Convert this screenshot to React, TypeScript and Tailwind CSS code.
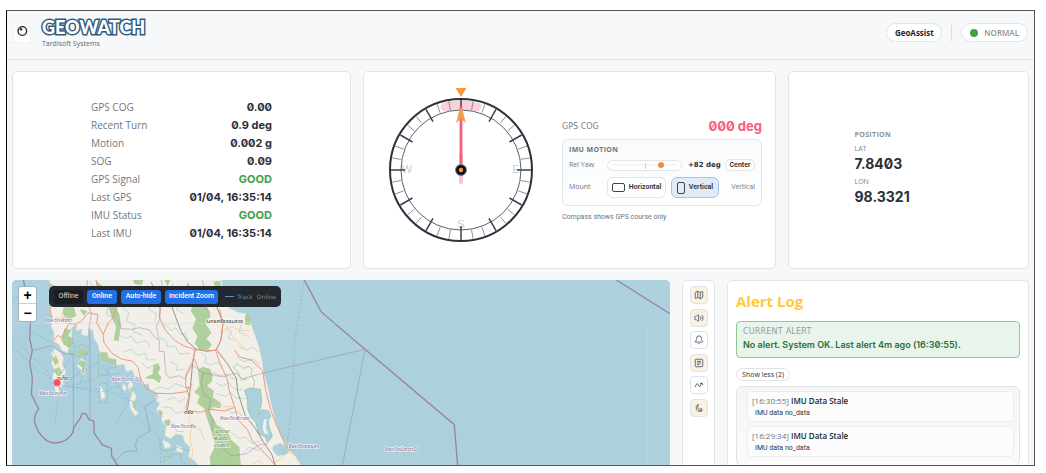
import type { ReactNode } from 'react';
import { Bell, Map, Moon, Volume2 } from 'lucide-react';

const readings = [
  { label: 'GPS COG', value: '0.00' },
  { label: 'Recent Turn', value: '0.9 deg' },
  { label: 'Motion', value: '0.002 g' },
  { label: 'SOG', value: '0.09' },
  { label: 'GPS Signal', value: 'GOOD', good: true },
  { label: 'Last GPS', value: '01/04, 16:35:14' },
  { label: 'IMU Status', value: 'GOOD', good: true },
  { label: 'Last IMU', value: '01/04, 16:35:14' },
];

const alerts = [
  { time: '[16:30:55]', title: 'IMU Data Stale', detail: 'IMU data no_data' },
  { time: '[16:29:34]', title: 'IMU Data Stale', detail: 'IMU data no_data' },
];

const Header = () => (
  <header className="flex items-center justify-between h-[49px] shrink-0 pl-[5px] pr-[6px] pb-[5px] border-b border-[#e1e5ea]">
    <div className="flex items-center gap-[10px]">
      <svg viewBox="0 0 60 66" className="w-5 h-[22px]" aria-hidden="true">
        <path d="M2 63V55Q5 52 5 44V30C5 12 16 3 30 3S55 12 55 30V44Q55 52 58 55V63Q50 58 42 62T24 62T2 63Z" fill="#fff" stroke="#e4e6e9" strokeWidth="2" strokeDasharray="6 4" />
        <circle cx="31" cy="27" r="13" fill="#fff" stroke="#222" strokeWidth="4" />
        <circle cx="27" cy="22" r="4" fill="#333" />
      </svg>
      <div>
        <h1 className="font-['Lato'] font-black text-[18px] leading-[22px] text-white [-webkit-text-stroke:3px_#315b7d] [paint-order:stroke_fill]">
          GEOWATCH
        </h1>
        <p className="text-[7px] leading-[12px] text-[#5f6874]">Tardisoft Systems</p>
      </div>
    </div>
    <div className="flex items-center gap-[9px]">
      <button className="h-[19px] w-14 rounded-full border border-[#dfe5eb] bg-white text-[8px] font-bold text-[#1f252c]">
        GeoAssist
      </button>
      <div className="w-px h-4 bg-[#d9dee3]" />
      <div className="flex items-center gap-[6px] h-[19px] px-2 rounded-full border border-[#dfe5eb] bg-white text-[8px] font-semibold text-[#8b929b]">
        <span className="size-2 rounded-full bg-[#43a047]" />
        NORMAL
      </div>
    </div>
  </header>
);

const Card = ({ children, className }: { children: ReactNode; className: string }) => (
  <section className={`rounded-[5px] border border-[#e0e5ea] bg-white ${className}`}>{children}</section>
);

const Compass = () => {
  const minor = Array.from({ length: 36 }, (_, i) => i * 10).filter((a) => a % 30 !== 0);
  const major = Array.from({ length: 12 }, (_, i) => i * 30);
  return (
    <svg viewBox="-76 -84 152 168" className="w-[152px] h-[168px] shrink-0" aria-label="Compass">
      <path d="M-16 -63A65 65 0 0 1 16 -63" fill="none" stroke="#fbd0d8" strokeWidth="9" strokeLinecap="round" />
      <g fill="#c8ccd3" fontSize="11" textAnchor="middle" fontFamily="Liberation Sans, sans-serif">
        <text x="0" y="-50">N</text>
        <text x="55" y="3">E</text>
        <text x="0" y="58">S</text>
        <text x="-54" y="3">W</text>
      </g>
      <circle r="71" fill="none" stroke="#2c323b" strokeWidth="2" />
      <circle r="60" fill="none" stroke="#59616c" strokeWidth="1" />
      {minor.map((a) => (
        <line key={a} y1="-70" y2="-61" stroke="#69717b" strokeWidth="0.7" transform={`rotate(${a})`} />
      ))}
      {major.map((a) => (
        <line key={a} y1="-70" y2="-56" stroke="#3a424d" strokeWidth="1.5" transform={`rotate(${a})`} />
      ))}
      <path d="M-5.5 -82H5.500L0 -73Z" fill="#f79a3e" />
      <path d="M0 -15V12" stroke="#fbc3ce" strokeWidth="4" strokeLinecap="round" />
      <path d="M0 -64V-6" stroke="#f4607d" strokeWidth="2.800" />
      <path d="M0 -63L5 -47L0 -51L-5 -47Z" fill="#f79a3e" />
      <circle r="5.500" fill="#0f141c" stroke="#7e858e" strokeWidth="0.800" />
      <circle r="2.200" fill="#f79a3e" />
    </svg>
  );
};

const CoursePanel = () => (
  <div className="w-[200px]">
    <div className="flex items-center justify-between h-[19px] mb-[3px]">
      <span className="font-['DejaVu_Sans'] text-[8px] text-[#7b838d]">GPS COG</span>
      <span className="font-['Inter'] slashed-zero text-[13px] font-bold text-[#f2607a]">000 deg</span>
    </div>
    <div className="h-[67px] rounded-md border border-[#dfe4e9] bg-linear-to-b from-[#f8fafc] to-white px-[6px] pt-1">
      <h2 className="text-[7px] leading-[12px] font-bold tracking-wider text-[#6b7480]">IMU MOTION</h2>
      <div className="flex items-center mt-[3px] h-3">
        <label htmlFor="yaw" className="w-[38px] text-[7px] text-[#6b7480]">Rel Yaw</label>
        <div className="relative flex items-center w-[75px] h-[11px] rounded-full border border-[#dfe4e9] bg-white px-1">
          <span className="absolute left-[37px] top-[2px] w-px h-[6px] bg-[#ccd1d7]" />
          <input
            id="yaw"
            type="range"
            min={-150}
            max={150}
            defaultValue={82}
            className="relative w-full h-[6px] appearance-none bg-linear-to-b from-transparent from-40% via-[#c3c8ce] via-50% to-transparent to-60% [&::-webkit-slider-thumb]:appearance-none [&::-webkit-slider-thumb]:size-[6px] [&::-webkit-slider-thumb]:rounded-full [&::-webkit-slider-thumb]:bg-[#f98b3c]"
          />
        </div>
        <span className="ml-[6px] font-['DejaVu_Sans'] text-[7px] font-bold whitespace-nowrap text-[#2a3038]">+82 deg</span>
        <button className="ml-auto w-[30px] h-3 shrink-0 rounded-full border border-[#dfe4e9] bg-white font-['Roboto'] text-[7px] leading-[10px] font-semibold text-[#2a3038]">
          Center
        </button>
      </div>
      <div className="flex items-center mt-[6px] h-[21px] text-[7px]">
        <span className="w-[38px] text-[#6b7480]">Mount</span>
        <button className="flex items-center justify-center gap-1 w-[59px] h-[21px] rounded-md border border-[#e1e5ea] bg-white font-['Roboto'] font-semibold text-[#2a3038]">
          <span className="w-[13px] h-[9px] rounded-[2px] border border-[#3d444e]" />
          Horizontal
        </button>
        <button className="flex items-center justify-center gap-1 ml-[5px] w-12 h-[21px] rounded-md border border-[#a3c4ef] bg-[#e1ebf7] font-['Roboto'] font-semibold text-[#2a3038]">
          <span className="w-2 h-3 rounded-[2px] border border-[#3d444e]" />
          Vertical
        </button>
        <span className="ml-auto font-['Roboto'] text-[#7b838d]">Vertical</span>
      </div>
    </div>
    <p className="mt-[5px] font-['Roboto'] text-[7px] leading-[12px] text-[#6b7480]">Compass shows GPS course only</p>
  </div>
);

const PositionCard = () => (
  <Card className="flex items-center justify-center">
    <div className="w-[108px] pb-1">
      <h2 className="text-[7px] leading-[12px] font-bold tracking-wider text-[#87909a]">POSITION</h2>
      <p className="mt-[3px] text-[7px] leading-[10px] text-[#7b838d]">LAT</p>
      <p className="font-['Inter'] slashed-zero text-[14px] leading-[20px] font-bold text-[#2a3038]">7.8403</p>
      <p className="mt-[3px] text-[7px] leading-[10px] text-[#7b838d]">LON</p>
      <p className="font-['Inter'] slashed-zero text-[14px] leading-[20px] font-bold text-[#2a3038]">98.3321</p>
    </div>
  </Card>
);

const placeLabels = [
  { x: 176, y: 155, text: 'จังหวัดพังงา', color: '#8d6f97' },
  { x: 188, y: 330, text: 'ภูเก็ต', color: '#333' },
  { x: 159, y: 376, text: 'จังหวัดภูเก็ต', color: '#8d6f97' },
  { x: 375, y: 332, text: 'จังหวัดกระบี่', color: '#8d6f97' },
  { x: 675, y: 160, text: 'นครศรีธรรมราช', color: '#333' },
  { x: 566, y: 433, text: 'ตรัง', color: '#333' },
  { x: 550, y: 475, text: 'จังหวัดตรัง', color: '#8d6f97' },
  { x: 703, y: 451, text: 'จังหวัดพัทลุง', color: '#8d6f97' },
  { x: 911, y: 535, text: 'จังหวัดสงขลา', color: '#8d6f97' },
  { x: 1203, y: 543, text: 'จังหวัดปัตตานี', color: '#8d6f97' },
];

const reserveLabel = [
  { y: 490, text: 'เขตรักษา' },
  { y: 511, text: 'พันธุ์สัตว์' },
  { y: 532, text: 'ป่าบรรทัด' },
];

const MapDrawing = () => (
  <svg viewBox="36 30 1977 558" preserveAspectRatio="xMinYMin slice" className="block w-full h-full" aria-label="Map">
    <rect x="36" y="30" width="1977" height="900" fill="#add1dd" />
    {/* land */}
    <g fill="#f2efe8" stroke="#c3d5d6" strokeWidth="1.5">
      <path d="M148 28L151 50L145 72L156 96L148 120L157 146L153 168L162 190L160 212L176 224L187 243L204 249L211 232L203 215L218 196L214 176L230 160L228 184L246 177L244 194L263 199L268 174L279 183L281 205L294 225L297 244L316 249L323 266L345 266L350 287L372 283L378 305L396 300L405 322L421 324L426 345L445 341L449 360L469 370L466 388L478 401L468 419L486 432L484 452L498 468L494 497L511 507L527 493L548 496L554 518L570 530L565 560L586 575L600 592H908L884 556L862 530L842 494L827 453L814 402L804 353L792 311L786 270L776 225L761 185L749 145L735 130L715 127L689 115L672 88L665 28Z" />
      <path d="M165 236L180 246L191 264L187 284L198 306L187 329L192 346L179 353L175 373L165 362L163 343L156 322L164 302L154 280L160 262L154 249Z" />
      <path d="M388 334L399 340L397 358L409 379L402 402L414 428L407 440L391 416L388 392L397 372L383 350ZM243 264L256 273L258 298L249 318L240 298L230 286ZM296 345L312 360L316 381L304 389ZM370 340L380 352L376 364L366 355Z" />
      <path d="M487 510L508 519L514 532L494 535ZM529 525L545 532L550 548L530 545Z" />
    </g>
    {/* forest */}
    <g fill="#afcf9c">
      <path d="M570 70L612 60L632 82L622 112L632 138L616 160L634 189L619 206L635 222L625 239L597 238L584 219L593 199L577 175L588 147L572 122L581 101Z" />
      <path d="M594 300L608 290L629 296L638 313L635 335L621 347L642 363L638 382L663 400L661 415L637 411L628 425L643 451L651 466L681 481L694 510L718 531L723 590H632L629 562L646 527L637 494L620 441L612 414L591 400L599 378L583 367L599 348Z" />
      <path d="M345 104L358 134L363 164L356 214L341 210L348 170L337 147L323 105ZM398 28H431L425 45L404 42ZM460 286L474 279L481 295L474 310L484 321L478 340L462 328L433 324L458 312ZM191 112L222 112L229 137L202 151L187 130ZM150 40L170 51L180 92L160 90ZM287 31L310 51L291 48ZM735 139L745 130L754 148L750 166L736 164Z" />
      <path d="M157 265L169 258L176 278L165 286ZM158 300L177 291L188 308L176 321ZM194 175L214 180L204 198L222 210L211 234L191 224L184 207ZM239 118L262 123L251 137ZM244 269L257 278L257 297L244 310L247 290L231 282ZM301 250L321 246L326 264L349 271L345 285L322 275L304 272ZM225 243L255 236L263 253L237 256ZM389 350L401 356L396 370ZM395 389L404 398L411 426L400 413ZM475 418L489 426L484 442ZM491 453L509 447L511 465L499 468ZM640 35L662 32L661 58L646 52ZM492 28L511 30L503 48ZM560 34L572 52L564 65Z" />
    </g>
    <g fill="#add1dd" stroke="#86b9a0" strokeWidth="2">
      <path d="M734 361L750 354L781 358L784 380L784 405L774 435L785 419L805 423L812 438L804 452L808 474L817 498L801 515L797 501L777 492L767 456L754 444L744 420L742 389Z" />
      <path d="M819 528L840 519L860 529L870 542L856 555L832 557L818 541Z" stroke="none" />
      <path d="M792 448L800 446L798 476L806 492L793 491L788 473Z" fill="#f2efe8" stroke="none" />
    </g>
    {/* rivers */}
    <g fill="none" stroke="#a3cddb" strokeWidth="2">
      <path d="M158 76L176 89L183 109M270 35L284 58L276 80L287 105M294 90L324 103L319 132L341 146M369 112L387 129L379 151L405 165L399 184L428 196M350 190L374 205L394 198L408 219L438 212L450 229M371 246L394 238L414 256L435 250L442 270L464 269M424 277L442 295L464 285M486 157L515 182L527 173L543 195L554 188L565 212M475 204L498 211L502 230L526 228L538 252L569 250M510 275L534 287L527 302L555 297M456 365L478 351L507 357L526 341L552 350M500 390L523 382L536 397L556 385M484 410L513 413L526 431L551 424M515 455L530 484L552 485M604 249L619 260L615 278L634 285L651 276L668 289M640 306L658 318L682 312L696 327L712 323M648 338L667 348L687 340L703 358L729 359M650 370L676 379L691 368L710 384L736 385M676 410L693 428L718 426L728 445L752 443M694 488L714 505L738 502L755 520L784 512M730 548L747 532L774 540L793 528M678 169L695 184L684 204L704 213M704 145L723 166L718 187L746 199M719 231L742 240L757 231L777 247M711 262L731 275L760 267L781 287M436 80L453 91L448 119L470 132L465 152M518 40L516 74L537 89L530 119L551 132" />
    </g>
    <g fill="none" stroke="#8fc29a" strokeWidth="2">
      <path d="M207 196V249L236 260L262 250L266 234L248 222L234 232L207 210M295 251V314H323V293H347V268M298 340H322V398H298ZM484 502V542H508L530 532L570 543M493 580V560H514V552H543V574L558 584M700 291L713 282L731 295L747 289L757 298L753 312L764 336L760 354M700 291L715 309L724 330L742 327" />
    </g>
    {/* minor roads */}
    <g fill="none" stroke="#f4cf8d" strokeWidth="2.5">
      <path d="M163 208L160 246L175 272L173 296L185 323L176 352M160 160L184 140L214 141M565 442L574 468L570 510L579 541L571 582M574 468L600 480L616 513M668 184L695 170L722 182L748 181M678 175L704 205L740 244M758 583L778 571L792 587M807 589L836 570L865 546L887 558M633 425L648 405L697 411" />
    </g>
    {/* railways */}
    <g fill="none" stroke="#96938f" strokeWidth="3">
      <path d="M516 111L529 147L544 184L562 215L588 237L620 244L650 240L682 281L709 325L713 366L736 437L766 475L790 516L815 552L827 588M585 240L578 278L573 334L568 381L561 427M648 240L662 213L669 158L650 110" />
    </g>
    {/* main roads */}
    <g fill="none" stroke="#ec9980" strokeWidth="3">
      <path d="M148 44L165 91L150 119L158 151M161 211L174 196L185 203L207 160L225 163L246 152L264 128L294 134L290 158L309 192L312 218L335 249L366 268L397 273L414 292L422 326L438 355L468 370L514 371L560 365L577 341M355 54L356 94L338 145L326 158L310 192M288 30L292 51L282 64L309 78L355 63M454 36L481 120L478 142L495 179L524 211L552 228L586 239L577 278L558 311L557 345L567 379L557 415L566 430L576 423L601 427L632 418L674 423L702 413M586 239L648 242L664 207L669 160L659 118M649 246L660 281L681 325L687 359L705 415L715 450L743 480L758 515L781 536L813 570L828 588M704 240L718 261L753 270L788 302M788 302L796 356L812 420L829 464L856 525L879 547M554 352H574M582 265L597 300" />
    </g>
    {/* province and maritime borders */}
    <g fill="none" stroke="#9b83a9">
      <path d="M70 28L76 60L70 88L92 145L89 207L97 242L89 278L97 323L94 373L116 417Q98 440 106 463Q111 482 125 498Q143 519 166 519Q199 517 215 493Q221 486 221 473L240 446L247 430L258 432L267 449L281 453L283 490L307 524L334 535L335 558L354 588" strokeWidth="4" />
      <path d="M912 28L963 125L1020 174L1095 238L1363 464L1373 588M1846 28L2013 133" strokeWidth="4" />
      <path d="M97 242L158 226L170 238L197 252L220 250V487M270 449V213L266 180L274 132L260 89L262 28M354 151L364 176L396 178L418 173L449 180L463 201L478 212L477 243L492 245L498 312L508 324L538 317L554 327L577 286M484 28L492 81L479 124L480 146L469 168L476 208M470 370L472 385L434 411L450 483L413 505L406 526L412 542L373 545L346 572M611 309L603 337L612 373L633 389L625 419L639 452L636 477L659 495L666 532L694 557L740 551L778 524L801 522L816 498M577 286L611 309L668 321L708 309L727 327L786 310L1095 238L1027 588M607 29L616 69L603 101L632 129" strokeWidth="2" opacity="0.750" />
    </g>
    {/* ferry routes */}
    <g fill="none" stroke="#82aee0" strokeWidth="2" strokeDasharray="7 6">
      <path d="M37 90L78 65M75 172L162 222M38 231L117 303L198 350L302 357L389 390M37 200L158 322M175 348L227 345L303 318L360 310M199 333L255 302L303 270M179 351L165 459M202 349L301 367L365 346M251 303L239 345M388 390L344 467M389 390L410 397L475 444M404 438L478 500L484 588M262 250L240 303L200 342M912 35L885 205L874 420L862 515M298 278L325 310L388 392M216 190L223 243L178 319" />
    </g>
    <path d="M36 160H2013M1942 160V588" stroke="#bfdde6" strokeWidth="2" opacity="0.700" />
    <g textAnchor="middle" fontFamily="Noto Sans Thai, Noto Sans, sans-serif" stroke="#fff" strokeOpacity="0.700" strokeWidth="4" paintOrder="stroke">
      {placeLabels.map((p) => (
        <text key={p.text} x={p.x} y={p.y} fontSize="17" fill={p.color}>{p.text}</text>
      ))}
      {reserveLabel.map((p) => (
        <text key={p.text} x="666" y={p.y} fontSize="13" fill="#43853d">{p.text}</text>
      ))}
    </g>
    <circle cx="171" cy="338" r="11" fill="#fb4c66" stroke="#fff" strokeOpacity="0.400" strokeWidth="2" />
  </svg>
);

const MapPanel = () => (
  <section className="relative overflow-hidden rounded-t-[5px] bg-[#add1dd]">
    <div className="absolute inset-0">
      <MapDrawing />
    </div>
    <div className="absolute left-[6px] top-[6px] flex items-start gap-3">
      <div className="flex flex-col w-[19px] rounded-[3px] border border-[#a0b6bd] bg-white">
        <button aria-label="Zoom in" className="h-[17px] border-b border-[#ccc] font-['Liberation_Sans'] text-[14px] leading-[16px] font-bold text-black">+</button>
        <button aria-label="Zoom out" className="h-[17px] font-['Liberation_Sans'] text-[14px] leading-[16px] font-bold text-black">−</button>
      </div>
      <div className="flex items-center gap-1 h-[21px] px-[5px] rounded-[5px] bg-[#22282e] font-['Roboto'] text-[7px] whitespace-nowrap">
        <button className="h-[14px] w-[29px] rounded-[3px] bg-[#1a1e23] text-[#d7dade]">Offline</button>
        <button className="h-[14px] w-[30px] rounded-[3px] bg-[#2370e6] font-medium text-white">Online</button>
        <button className="h-[14px] w-10 rounded-[3px] bg-[#2370e6] font-medium text-white">Auto-hide</button>
        <button className="h-[14px] w-[53px] rounded-[3px] bg-[#2370e6] font-medium text-white">Incident Zoom</button>
        <span className="flex items-center gap-[3px] ml-[3px] font-['DejaVu_Sans'] text-[6px] text-[#7f8790]">
          <span className="w-[9px] h-px bg-[#4a93d9]" />
          Track
        </span>
        <span className="font-['DejaVu_Sans'] text-[6px] text-[#7f8790]">Online</span>
      </div>
    </div>
  </section>
);

const ToolButton = ({ label, active, children }: { label: string; active?: boolean; children: ReactNode }) => (
  <button
    aria-label={label}
    className={`flex items-center justify-center size-[18px] rounded-[4px] border border-[#dde3e8] text-[#4c5560] ${active ? 'bg-[#faf1e3]' : 'bg-white'}`}
  >
    {children}
  </button>
);

const ToolRail = () => (
  <Card className="rounded-b-none border-b-0 pt-[5px]">
    <div className="flex flex-col items-center justify-between h-[131px]">
      <ToolButton label="Map" active><Map size={10} /></ToolButton>
      <ToolButton label="Sound" active><Volume2 size={10} /></ToolButton>
      <ToolButton label="Alerts"><Bell size={10} /></ToolButton>
      <ToolButton label="Log" active>
        <svg viewBox="0 0 24 24" className="size-[10px]" fill="none" stroke="currentColor" strokeWidth="2">
          <rect x="3" y="3" width="18" height="18" rx="2" />
          <path d="M7 8H17M7 12H17M7 16H13" />
        </svg>
      </ToolButton>
      <ToolButton label="Track">
        <svg viewBox="0 0 24 24" className="size-[10px]" fill="none" stroke="currentColor" strokeWidth="2.200" strokeLinecap="round" strokeLinejoin="round">
          <path d="M3 16L6 10Q8 6 10 11L12 15Q14 18 16 13L18 8M15 9L19 7L21 11" />
        </svg>
      </ToolButton>
      <ToolButton label="Night mode" active>
        <svg viewBox="0 0 24 24" className="size-[10px]" fill="none" stroke="currentColor" strokeWidth="2" strokeLinejoin="round">
          <path d="M11 3A9 9 0 1 0 19 19A10 10 0 0 1 11 3Z" />
          <path d="M13 14H19V19" />
        </svg>
      </ToolButton>
    </div>
  </Card>
);

const AlertLog = () => (
  <Card className="rounded-b-none border-b-0 px-2 pt-2">
    <h2 className="text-[15px] leading-[24px] font-bold text-[#ffca38]">Alert Log</h2>
    <div className="mt-2 h-[37px] rounded-[4px] border border-[#8bcb90] bg-[#e9f4ea] px-[6px] pt-1 whitespace-nowrap">
      <p className="font-['DejaVu_Sans'] text-[8px] leading-[12px] tracking-wide text-[#949da3]">CURRENT ALERT</p>
      <p className="font-['Inter'] slashed-zero text-[9px] leading-[14px] font-semibold text-[#29703a]">
        No alert. System OK. Last alert 4m ago (16:30:55).
      </p>
    </div>
    <button className="block mt-[10px] w-[54px] h-[13px] rounded-full border border-[#dfe3e8] bg-white text-[7px] leading-[11px] text-[#2f363e]">
      Show less (2)
    </button>
    <ul className="flex flex-col gap-1 mt-[5px] h-20 rounded-md border border-[#e0e4e8] bg-linear-to-b from-[#f5f5f6] to-[#fbfbfb] pl-[10px] pr-[5px] pt-[4px]">
      {alerts.map((a) => (
        <li key={a.time} className="h-[31px] rounded-[4px] border border-[#ebedef] bg-[#fcfcfc] px-1 pt-[2px]">
          <p className="text-[8px] leading-[13px] text-[#6b7480]">
            {a.time} <b className="font-semibold text-[#22282f]">{a.title}</b>
          </p>
          <p className="pl-[3px] font-['Roboto'] text-[7px] leading-[13px] text-[#2f363e]">{a.detail}</p>
        </li>
      ))}
    </ul>
  </Card>
);

export default function App() {
  return (
    <div className="h-screen bg-white pt-[10px] pr-[11px] pb-[7px] pl-[6px] font-['Open_Sans',sans-serif]">
      <div className="flex flex-col h-full overflow-hidden border border-[#555] border-l-black bg-[#f6f8fa]">
        <Header />
        <main className="flex flex-col grow gap-[11px] px-[5px] pt-[11px]">
          <div className="grid grid-cols-[339fr_413fr_241fr] gap-3 h-[198px] shrink-0">
            <Card className="flex items-center justify-center">
              <dl className="w-[181px]">
                {readings.map((r) => (
                  <div key={r.label} className="flex items-center justify-between h-[18px]">
                    <dt className="text-[10px] text-[#6f7782]">{r.label}</dt>
                    <dd className={`font-['Inter'] slashed-zero text-[11px] font-bold ${r.good ? 'text-[#43a047]' : 'text-[#2a3038]'}`}>{r.value}</dd>
                  </div>
                ))}
              </dl>
            </Card>
            <Card className="flex items-center justify-between pl-[21px] pr-[13px]">
              <Compass />
              <CoursePanel />
            </Card>
            <PositionCard />
          </div>
          <div className="grid grid-cols-[minmax(0,1fr)_33px_302px] gap-3 grow">
            <MapPanel />
            <ToolRail />
            <AlertLog />
          </div>
        </main>
      </div>
    </div>
  );
}
